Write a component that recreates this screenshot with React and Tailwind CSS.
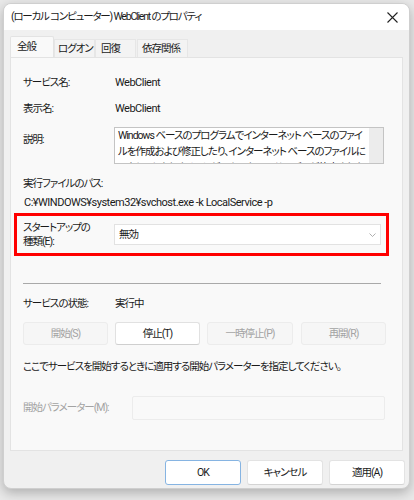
const font = "[font-family:'Roboto','Noto_Sans_CJK_JP',sans-serif] [font-feature-settings:'palt']"
const jp = 'text-[10.5px] tracking-[-1px]'
const en = 'text-[11px] tracking-[-0.5px]'

function Tab({ label, active, width, pad }) {
  return active ? (
    <div className={`h-[21px] flex items-center bg-[#f9f9f9] border border-b-0 border-[#e3e3e3] rounded-t-[2px] relative z-10 -mb-px text-[#1a1a1a] ${jp} ${width} ${pad}`}>
      {label}
    </div>
  ) : (
    <div className={`h-[18px] mt-[3px] flex items-center bg-[#f3f3f3] border border-b-0 border-[#e6e6e6] text-[#1a1a1a] ${jp} ${width} ${pad}`}>
      {label}
    </div>
  )
}

function Row({ label, value, valueClass = jp, className = '' }) {
  return (
    <div className={`flex h-[16px] items-center text-[#1a1a1a] ${className}`}>
      <span className={`w-[92px] shrink-0 ${jp}`}>{label}</span>
      <span className={valueClass}>{value}</span>
    </div>
  )
}

function SmallButton({ label, disabled, width }) {
  return (
    <div
      className={`h-[23px] flex items-center justify-center rounded-[3px] border ${jp} ${width} ${
        disabled
          ? 'bg-[#f6f6f6] border-[#ececec] text-[#a3a3a3]'
          : 'bg-white border-[#e1e1e1] border-b-[#cfcfcf] text-[#1a1a1a]'
      }`}
    >
      {label}
    </div>
  )
}

function DialogButton({ label, primary }) {
  return (
    <div
      className={`w-[76px] h-[25px] flex items-center justify-center rounded-[3px] text-[#1a1a1a] bg-white border ${jp} ${
        primary ? 'border-[#86b4e2]' : 'border-[#e3e3e3] border-b-[#d4d4d4]'
      }`}
    >
      {label}
    </div>
  )
}

export default function App() {
  return (
    <div className={`w-[414px] h-[500px] bg-[#e9e9e9] pt-[3px] pl-[3px] overflow-hidden ${font}`}>
      <div className="w-[407px] h-[486px] rounded-[8px] border border-[#cfcfcf] bg-[#f0f0f0] shadow-[0_4px_12px_rgba(0,0,0,0.25)] overflow-hidden flex flex-col">
        {/* title bar */}
        <div className="h-[26px] bg-white flex items-center justify-between pl-[7px] pr-[8px] shrink-0">
          <span className="text-[10.5px] tracking-[-1.2px] text-[#1a1a1a]">(ローカル コンピューター) WebClient のプロパティ</span>
          <svg width="11" height="11" viewBox="0 0 11 11" className="mr-[3px]">
            <path d="M0.5 0.5L10.5 10.5M10.5 0.5L0.5 10.5" stroke="#222" strokeWidth="1.1" />
          </svg>
        </div>

        {/* tabs */}
        <div className="flex items-start pl-[6px] mt-[6px]">
          <Tab label="全般" active width="w-[44px]" pad="pl-[6px]" />
          <Tab label="ログオン" width="w-[41px]" pad="pl-[3px]" />
          <Tab label="回復" width="w-[41px]" pad="pl-[5px]" />
          <div className="w-px" />
          <Tab label="依存関係" width="w-[51px]" pad="pl-[4px]" />
        </div>

        {/* panel */}
        <div className="mx-[6px] h-[394px] bg-[#f9f9f9] border border-[#e3e3e3] pl-[12px] pt-[17px] flex flex-col">
          <Row label="サービス名:" value="WebClient" valueClass={en} />
          <Row label="表示名:" value="WebClient" valueClass={en} className="mt-[10px]" />

          <div className="flex mt-[10px]">
            <span className={`w-[91px] shrink-0 mt-[5px] h-[16px] leading-[16px] text-[#1a1a1a] ${jp}`}>説明:</span>
            <div className="w-[270px] h-[37px] border border-[#c4c4c4] bg-white flex overflow-hidden">
              <div className={`flex-1 pl-[3px] pr-[2px] leading-[16px] text-[#1a1a1a] overflow-hidden ${jp}`}>
                Windows ベースのプログラムでインターネット ベースのファイルを作成および修正したり、インターネット ベースのファイルにアクセスしたりすることができます。このサービスが停止された場合、これらの機能は使用できなくなります。
              </div>
              <div className="w-[14px] bg-[#ececec] shrink-0" />
            </div>
          </div>

          <div className={`mt-[12px] h-[16px] leading-[16px] text-[#1a1a1a] ${jp}`}>実行ファイルのパス:</div>
          <div className={`mt-[3px] h-[16px] leading-[16px] text-[#1a1a1a] pl-[1px] ${en}`}>
            C:¥WINDOWS¥system32¥svchost.exe -k LocalService -p
          </div>

          <div className="-ml-[9px] mt-[2px] w-[375px] h-[43px] border-[3px] border-[#ff0000] flex items-center pl-[6px]">
            <div className={`w-[91px] shrink-0 leading-[14px] text-[#1a1a1a] ${jp}`}>
              <div>スタートアップの</div>
              <div>種類(E):</div>
            </div>
            <div className={`w-[267px] h-[21px] bg-white border border-[#e2e2e2] flex items-center justify-between pl-[4px] pr-[4px] text-[#1a1a1a] ${jp}`}>
              <span>無効</span>
              <svg width="7" height="4" viewBox="0 0 7 4">
                <path d="M0.5 0.5L3.5 3.5L6.5 0.5" stroke="#9a9a9a" strokeWidth="0.8" fill="none" />
              </svg>
            </div>
          </div>

          <div className="mt-[27px] w-[358px] h-px bg-[#a9a9a9]" />

          <Row label="サービスの状態:" value="実行中" className="mt-[12px]" />

          <div className="flex mt-[10px]">
            <SmallButton label="開始(S)" disabled width="w-[85px]" />
            <div className="w-[7px]" />
            <SmallButton label="停止(T)" width="w-[85px]" />
            <div className="w-[7px]" />
            <SmallButton label="一時停止(P)" disabled width="w-[86px]" />
            <div className="w-[8px]" />
            <SmallButton label="再開(R)" disabled width="w-[85px]" />
          </div>

          <div className={`mt-[14px] h-[16px] leading-[16px] text-[#1a1a1a] ${jp}`}>
            ここでサービスを開始するときに適用する開始パラメーターを指定してください。
          </div>

          <div className="flex items-center mt-[21px]">
            <span className={`w-[109px] shrink-0 text-[#a3a3a3] ${jp}`}>開始パラメーター(M):</span>
            <div className="w-[253px] h-[24px] bg-[#f9f9f9] border border-[#ececec] rounded-[2px]" />
          </div>
        </div>

        {/* dialog buttons */}
        <div className="flex justify-end gap-[6px] pr-[4px] mt-[9px]">
          <DialogButton label="OK" primary />
          <DialogButton label="キャンセル" />
          <DialogButton label="適用(A)" />
        </div>
      </div>
    </div>
  )
}
